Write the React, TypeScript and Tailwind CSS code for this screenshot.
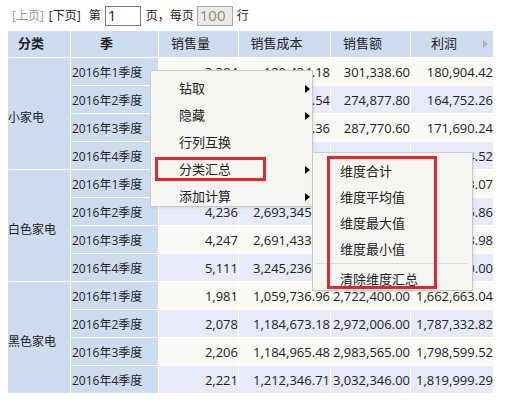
const rows = [
  { cat: '小家电', q: '2016年1季度', qty: '3,384', cost: '120,434.18', sales: '301,338.60', profit: '180,904.42' },
  { cat: '', q: '2016年2季度', qty: '3,012', cost: '110,125.54', sales: '274,877.80', profit: '164,752.26' },
  { cat: '', q: '2016年3季度', qty: '3,150', cost: '116,080.36', sales: '287,770.60', profit: '171,690.24' },
  { cat: '', q: '2016年4季度', qty: '3,402', cost: '124,905.48', sales: '310,220.00', profit: '185,314.52' },
  { cat: '白色家电', q: '2016年1季度', qty: '4,016', cost: '2,551,002.93', sales: '4,222,006.00', profit: '1,671,003.07' },
  { cat: '', q: '2016年2季度', qty: '4,236', cost: '2,693,345.14', sales: '4,482,011.00', profit: '1,788,665.86' },
  { cat: '', q: '2016年3季度', qty: '4,247', cost: '2,691,433.02', sales: '4,494,612.00', profit: '1,803,178.98' },
  { cat: '', q: '2016年4季度', qty: '5,111', cost: '3,245,236.00', sales: '5,401,236.00', profit: '2,156,000.00' },
  { cat: '黑色家电', q: '2016年1季度', qty: '1,981', cost: '1,059,736.96', sales: '2,722,400.00', profit: '1,662,663.04' },
  { cat: '', q: '2016年2季度', qty: '2,078', cost: '1,184,673.18', sales: '2,972,006.00', profit: '1,787,332.82' },
  { cat: '', q: '2016年3季度', qty: '2,206', cost: '1,184,965.48', sales: '2,983,565.00', profit: '1,798,599.52' },
  { cat: '', q: '2016年4季度', qty: '2,221', cost: '1,212,346.71', sales: '3,032,346.00', profit: '1,819,999.29' },
];

const menu = [
  { label: '钻取', sub: true },
  { label: '隐藏', sub: true },
  { label: '行列互换', sub: false },
  { label: '分类汇总', sub: true },
  { label: '添加计算', sub: true },
];

function Arrow() {
  return (
    <span className="absolute right-[2px] top-1/2 -translate-y-1/2 h-0 w-0 border-y-[4px] border-y-transparent border-l-[5px] border-l-black" />
  );
}

export default function App() {
  return (
    <div className="relative w-[523px] h-[411px] overflow-hidden bg-white text-[#222] font-['Open_Sans','Noto_Sans_CJK_SC',sans-serif]">
      {/* pager */}
      <div className="flex h-[31px] items-center pl-3 text-[12px]">
        <span className="text-[#999]">[上页]</span>
        <span className="ml-[5px]">[下页]</span>
        <span className="ml-[8px]">第</span>
        <div className="ml-[4px] flex h-[20px] w-[36px] items-center border border-[#7a7a7a] pl-[2px] text-[15px] leading-none">1</div>
        <span className="ml-[5px]">页，每页</span>
        <div className="ml-[3px] flex h-[20px] w-[36px] items-center border border-[#a9a9a9] bg-[#ebebe4] pl-[2px] text-[15px] leading-none text-[#8a8a8a]">100</div>
        <span className="ml-[4px]">行</span>
      </div>

      {/* pivot table */}
      <div className="ml-2 grid w-[485px] grid-cols-[62px_87px_79px_91px_79px_82px] grid-rows-[26px_repeat(12,27px)] gap-px bg-white">
        <div className="flex items-center justify-center bg-[#cddcef] pr-4 text-[13px] font-bold">分类</div>
        <div className="flex items-center justify-center bg-[#cddcef] pr-4 text-[13px] font-bold">季</div>
        <div className="flex items-center justify-center bg-[#cddcef] pr-4 text-[13px]">销售量</div>
        <div className="flex items-center justify-center bg-[#cddcef] pr-4 text-[13px]">销售成本</div>
        <div className="flex items-center justify-center bg-[#cddcef] pr-4 text-[13px]">销售额</div>
        <div className="relative flex items-center justify-center bg-[#cddcef] pr-4 text-[13px]">
          利润
          <span className="absolute right-[5px] top-1/2 -translate-y-1/2 h-0 w-0 border-y-[4px] border-y-transparent border-l-[5px] border-l-[#b0b0b0]" />
        </div>

        {rows.map((r, i) => {
          const bg = i % 2 === 0 ? 'bg-[#faf9f4]' : 'bg-[#e6eafb]';
          return [
            r.cat ? (
              <div key={`c${i}`} className="row-span-4 flex items-center bg-[#cddcef] pt-[8px] text-[12px]">
                {r.cat}
              </div>
            ) : null,
            <div key={`q${i}`} className="flex items-center bg-[#cddcef] pl-[1px] pt-[2px] text-[12px] whitespace-nowrap">
              {r.q}
            </div>,
            ...[r.qty, r.cost, r.sales, r.profit].map((v, j) => (
              <div key={`d${i}-${j}`} className={`flex items-center justify-end whitespace-nowrap pt-[2px] text-[13px] ${bg}`}>
                {v}
              </div>
            )),
          ];
        })}
      </div>

      {/* context menu */}
      <div className="absolute left-[150px] top-[70px] h-[137px] w-[163px] overflow-hidden border border-[#c9c9c9] bg-[#f5f5f2] pt-[4px] shadow-[1px_1px_2px_rgba(0,0,0,0.08)]">
        {menu.map((m) => (
          <div key={m.label} className="relative flex h-[27px] items-center pl-[28px] text-[13px]">
            {m.label}
            {m.sub && <Arrow />}
          </div>
        ))}
      </div>

      {/* submenu */}
      <div className="absolute left-[312px] top-[152px] h-[139px] w-[161px] border border-[#c9c9c9] bg-[#f5f5f2] pt-[6px] shadow-[1px_1px_2px_rgba(0,0,0,0.08)]">
        {['维度合计', '维度平均值', '维度最大值', '维度最小值'].map((s) => (
          <div key={s} className="flex h-[26px] items-center pl-[27px] text-[13px]">
            {s}
          </div>
        ))}
        <div className="mx-[4px] mb-[3px] h-px bg-[#dcdcdc]" />
        <div className="flex h-[26px] items-center pl-[27px] text-[13px]">清除维度汇总</div>
      </div>

      {/* highlight boxes */}
      <div className="absolute left-[155px] top-[157px] h-[24px] w-[111px] border-[3px] border-[#e4262d]" />
      <div className="absolute left-[327px] top-[156px] h-[133px] w-[110px] border-[3px] border-[#e4262d]" />
    </div>
  );
}
